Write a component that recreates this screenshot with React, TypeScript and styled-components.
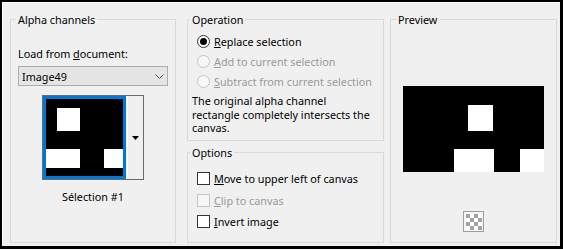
import styled, { createGlobalStyle } from 'styled-components';

const GlobalStyle = createGlobalStyle`
  html, body {
    margin: 0;
    padding: 0;
    background: #fff;
  }
  body {
    font-family: 'Noto Sans', 'Liberation Sans', sans-serif;
    font-size: 10.8px;
    color: #000;
  }
`;

// dialog frame, black outline with a white inner highlight
const Frame = styled.div`
  box-sizing: border-box;
  width: 563px;
  height: 249px;
  border-style: solid;
  border-color: #000;
  border-width: 2px 3px 3px 2px;
  background: #f0f0f0;
  box-shadow: inset 1px 1px 0 #fff;
  display: flex;
  align-items: flex-start;
  padding: 10px 0 0 8px;
`;

const Column = styled.div<{ $gapAfter: number }>`
  display: flex;
  flex-direction: column;
  gap: 4px;
  margin-right: ${(p) => p.$gapAfter}px;
`;

const Group = styled.fieldset<{ $w: number; $h: number }>`
  box-sizing: border-box;
  width: ${(p) => p.$w}px;
  height: ${(p) => p.$h}px;
  margin: 0;
  padding: 0;
  min-width: 0;
  border: 1px solid #d9d9d9;
`;

const Legend = styled.legend<{ $indent: number }>`
  margin-left: ${(p) => p.$indent}px;
  padding: 0 2px;
  line-height: 15px;
  color: #000;
`;

const Body = styled.div<{ $pad: string; $center?: boolean }>`
  display: flex;
  flex-direction: column;
  align-items: ${(p) => (p.$center ? 'center' : 'stretch')};
  padding: ${(p) => p.$pad};
`;

const Label = styled.div`
  line-height: 15px;
  white-space: nowrap;
`;

const Select = styled.div`
  box-sizing: border-box;
  height: 20px;
  margin-top: 5px;
  display: flex;
  align-items: center;
  justify-content: space-between;
  padding: 0 3px 0 3px;
  border: 1px solid #adadad;
  background: #e5e5e5;
  line-height: 15px;
`;

const ThumbBox = styled.div`
  box-sizing: border-box;
  width: 102px;
  height: 85px;
  margin-top: 9px;
  align-self: center;
  display: flex;
  border: 1px solid #6a6a6a;
  background: #f0f0f0;
`;

const Tile = styled.div`
  box-sizing: border-box;
  width: 83px;
  height: 83px;
  border: 3px solid #0078d7;
  background: #000;
  display: flex;
`;

const DropButton = styled.div`
  flex: 1;
  margin-left: 1px;
  display: flex;
  align-items: center;
  justify-content: center;
  background: #f0f0f0;
  border-left: 1px solid #fff;
`;

const Caption = styled.div`
  margin-top: 9px;
  line-height: 15px;
  text-align: center;
`;

const ChoiceRow = styled.div<{ $h: number; $disabled?: boolean }>`
  height: ${(p) => p.$h}px;
  display: flex;
  align-items: center;
  padding-left: 5px;
  gap: 4px;
  white-space: nowrap;
  color: ${(p) => (p.$disabled ? '#9a9a9a' : '#000')};
`;

const Radio = styled.span<{ $checked?: boolean; $disabled?: boolean }>`
  box-sizing: border-box;
  width: 13px;
  height: 13px;
  flex: none;
  border-radius: 50%;
  border: 1px solid ${(p) => (p.$disabled ? '#c4c4c4' : '#333')};
  background: ${(p) => (p.$disabled ? '#f7f7f7' : '#fff')};
  display: flex;
  align-items: center;
  justify-content: center;
  &::after {
    content: '';
    display: ${(p) => (p.$checked ? 'block' : 'none')};
    width: 7px;
    height: 7px;
    border-radius: 50%;
    background: #000;
  }
`;

const Check = styled.span<{ $disabled?: boolean }>`
  box-sizing: border-box;
  width: 13px;
  height: 13px;
  flex: none;
  border: 1px solid ${(p) => (p.$disabled ? '#c4c4c4' : '#333')};
  background: ${(p) => (p.$disabled ? '#f7f7f7' : '#fff')};
`;

const Note = styled.div`
  margin-top: 3px;
  line-height: 13.3px;
  white-space: pre-line;
`;

const PreviewPic = styled.svg`
  display: block;
`;

const AlphaIcon = styled.svg`
  display: block;
  margin-top: 39px;
`;

const Chevron = () => (
  <svg width="9" height="5" viewBox="0 0 9 5">
    <polyline points="0.5,0.5 4.5,4.5 8.5,0.5" fill="none" stroke="#555" strokeWidth="1" />
  </svg>
);

const DownArrow = () => (
  <svg width="7" height="4" viewBox="0 0 7 4">
    <polygon points="0,0 7,0 3.5,4" fill="#000" />
  </svg>
);

const Checker = () => {
  const cells = [];
  for (let r = 0; r < 4; r++) {
    for (let c = 0; c < 4; c++) {
      if ((r + c) % 2 === 0) {
        cells.push(<rect key={`${r}-${c}`} x={3 + c * 4} y={3 + r * 4} width="4" height="4" fill="#a3a3a3" />);
      }
    }
  }
  return (
    <AlphaIcon width="21" height="21" viewBox="0 0 21 21">
      <rect x="0.5" y="0.5" width="20" height="20" fill="#f4f4f4" stroke="#9e9e9e" />
      <rect x="3" y="3" width="15" height="15" fill="#fff" />
      {cells}
    </AlphaIcon>
  );
};

export default function App() {
  return (
    <>
      <GlobalStyle />
      <Frame>
        <Column $gapAfter={11}>
          <Group $w={166} $h={231}>
            <Legend $indent={5}>Alpha channels</Legend>
            <Body $pad="19px 7px 0">
              <Label>
                Load from <u>d</u>ocument:
              </Label>
              <Select>
                <span>Image49</span>
                <Chevron />
              </Select>
              <ThumbBox>
                <Tile>
                  <svg width="77" height="77" viewBox="0 0 77 77">
                    <rect width="77" height="77" fill="#000" />
                    <rect x="11" y="9" width="23" height="23" fill="#fff" />
                    <rect x="0" y="50" width="34" height="19" fill="#fff" />
                    <rect x="58" y="50" width="19" height="19" fill="#fff" />
                  </svg>
                </Tile>
                <DropButton>
                  <DownArrow />
                </DropButton>
              </ThumbBox>
              <Caption>Sélection #1</Caption>
            </Body>
          </Group>
        </Column>

        <Column $gapAfter={6}>
          <Group $w={197} $h={129}>
            <Legend $indent={2}>Operation</Legend>
            <Body $pad="5px 4px 0">
              <ChoiceRow $h={19.75}>
                <Radio $checked />
                <span>
                  <u>R</u>eplace selection
                </span>
              </ChoiceRow>
              <ChoiceRow $h={19.75} $disabled>
                <Radio $disabled />
                <span>
                  <u>A</u>dd to current selection
                </span>
              </ChoiceRow>
              <ChoiceRow $h={19.75} $disabled>
                <Radio $disabled />
                <span>
                  <u>S</u>ubtract from current selection
                </span>
              </ChoiceRow>
              <Note>{'The original alpha channel\nrectangle completely intersects the\ncanvas.'}</Note>
            </Body>
          </Group>
          <Group $w={197} $h={98}>
            <Legend $indent={2}>Options</Legend>
            <Body $pad="8px 4px 0">
              <ChoiceRow $h={21.5}>
                <Check />
                <span>
                  <u>M</u>ove to upper left of canvas
                </span>
              </ChoiceRow>
              <ChoiceRow $h={21.5} $disabled>
                <Check $disabled />
                <span>
                  <u>C</u>lip to canvas
                </span>
              </ChoiceRow>
              <ChoiceRow $h={21.5}>
                <Check />
                <span>
                  <u>I</u>nvert image
                </span>
              </ChoiceRow>
            </Body>
          </Group>
        </Column>

        <Column $gapAfter={0}>
          <Group $w={167} $h={231}>
            <Legend $indent={5}>Preview</Legend>
            <Body $pad="59px 0 0" $center>
              <PreviewPic width="141" height="86" viewBox="0 0 141 86">
                <rect width="141" height="86" fill="#000" />
                <rect x="65" y="19" width="25" height="26" fill="#fff" />
                <rect x="51" y="63" width="40" height="23" fill="#fff" />
                <rect x="117" y="63" width="24" height="23" fill="#fff" />
              </PreviewPic>
              <Checker />
            </Body>
          </Group>
        </Column>
      </Frame>
    </>
  );
}
